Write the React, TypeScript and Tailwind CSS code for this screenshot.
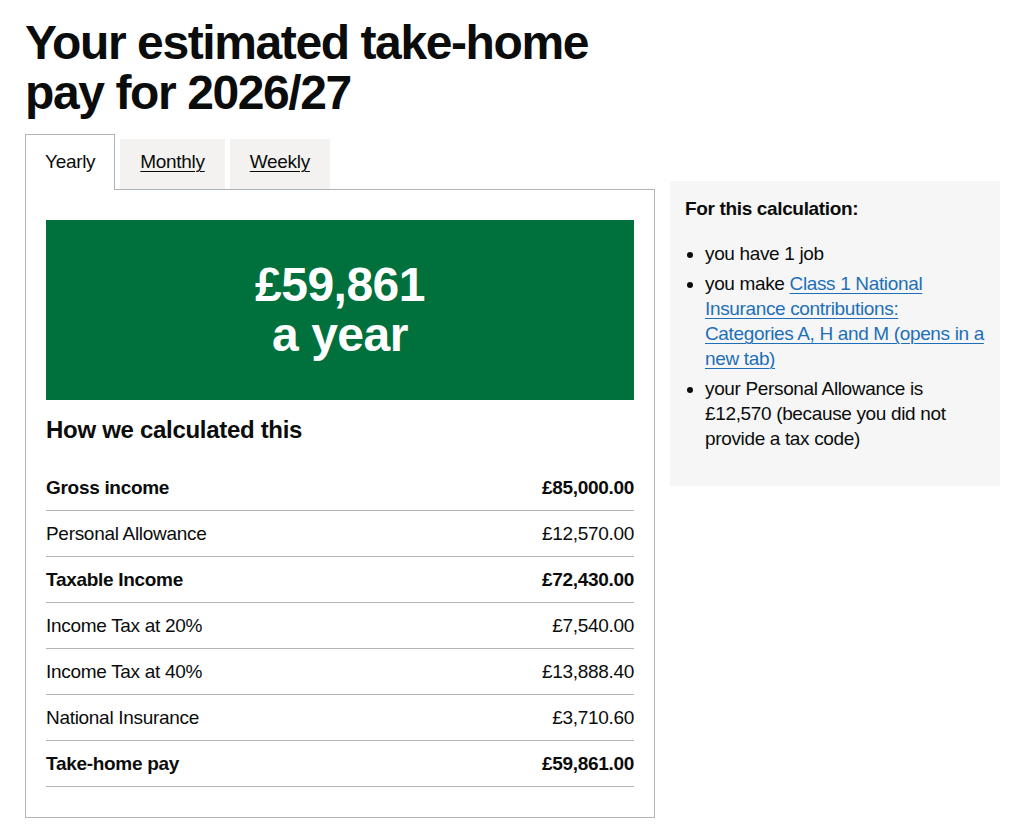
const rows = [
  {label: "Gross income", value: "£85,000.00", bold: true},
  {label: "Personal Allowance", value: "£12,570.00"},
  {label: "Taxable Income", value: "£72,430.00", bold: true},
  {label: "Income Tax at 20%", value: "£7,540.00"},
  {label: "Income Tax at 40%", value: "£13,888.40"},
  {label: "National Insurance", value: "£3,710.60"},
  {label: "Take-home pay", value: "£59,861.00", bold: true},
];

export default function App() {
  return (
    <div className="min-h-screen bg-white pl-[25px] pt-[18px] text-[#0b0c0c] font-['Liberation_Sans',Arial,sans-serif]">
      <h1 className="mb-[21px] w-[630px] text-[48px] font-bold leading-[50px] tracking-[-1.4px]">
        Your estimated take-home pay for 2026/27
      </h1>

      <div className="flex items-start gap-[15px]">
        {/* left column: tabs + result */}
        <div className="w-[630px] shrink-0">
          <ul className="flex text-[19px] leading-[25px]">
            <li className="relative z-10 -mt-[5px] mr-[5px] -mb-px border border-b-0 border-[#b1b4b6] bg-white px-[19px] pt-[14px] pb-[16px] tracking-[-0.3px]">
              Yearly
            </li>
            <li className="mr-[5px] bg-[#f3f2f1] px-[20px] py-[10px] tracking-[-0.3px]">
              <a href="#" className="underline underline-offset-[3px] decoration-1">Monthly</a>
            </li>
            <li className="bg-[#f3f2f1] px-[20px] py-[10px] tracking-[-0.3px]">
              <a href="#" className="underline underline-offset-[3px] decoration-1">Weekly</a>
            </li>
          </ul>

          <div className="border border-[#b1b4b6] px-[20px] pt-[30px] pb-[30px]">
            <div className="bg-[#00703c] p-[40px] text-center text-[48px] font-bold leading-[50px] tracking-[-0.5px] text-white">
              £59,861
              <br/>
              a year
            </div>

            <h2 className="mt-[15px] mb-[20px] text-[24px] font-bold leading-[30px] tracking-[-0.3px]">
              How we calculated this
            </h2>

            <table className="w-full text-[19px] leading-[25px] tracking-[-0.3px]">
              <tbody>
              {rows.map((r) => (
                <tr key={r.label} className="border-b border-[#b1b4b6]">
                  <td className={`py-[10px] pr-[20px] ${r.bold ? "font-bold" : ""}`}>{r.label}</td>
                  <td className={`py-[10px] text-right ${r.bold ? "font-bold" : ""}`}>{r.value}</td>
                </tr>
              ))}
              </tbody>
            </table>
          </div>
        </div>

        {/* sidebar */}
        <aside className="mt-[42px] w-[330px] shrink-0 bg-[#f6f6f6] p-[15px] pb-[35px] text-[19px] leading-[25px] tracking-[-0.35px]">
          <h3 className="mb-[20px] font-bold">For this calculation:</h3>
          <ul className="list-disc pl-[20px] space-y-[5px]">
            <li>you have 1 job</li>
            <li>
              you make{" "}
              <a href="#" className="text-[#1d70b8] underline underline-offset-[3px] decoration-1">
                Class 1 National Insurance contributions: Categories A, H and M (opens in a new tab)
              </a>
            </li>
            <li>your Personal Allowance is £12,570 (because you did not provide a tax code)</li>
          </ul>
        </aside>
      </div>
    </div>
  );
}
